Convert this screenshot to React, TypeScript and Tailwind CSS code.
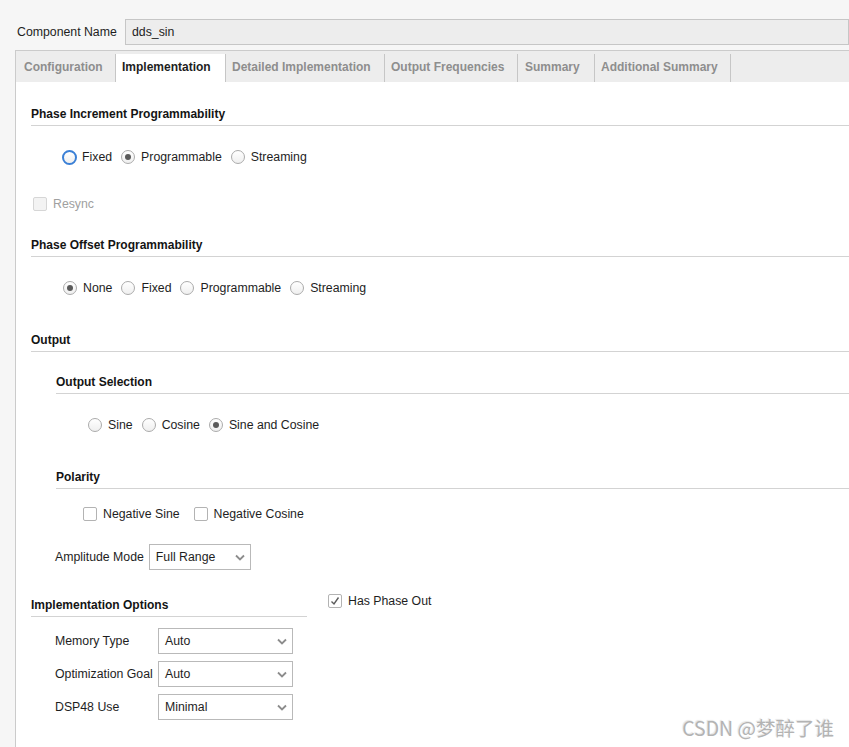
import React from "react";

const tabs = [
  { label: "Configuration", width: "w-[100px]", pad: "pl-[8px]" },
  { label: "Implementation", width: "w-[110px]", pad: "pl-[6px]", active: true },
  { label: "Detailed Implementation", width: "w-[159px]", pad: "pl-[6px]" },
  { label: "Output Frequencies", width: "w-[133px]", pad: "pl-[6px]" },
  { label: "Summary", width: "w-[77px]", pad: "pl-[7px]" },
  { label: "Additional Summary", width: "w-[136px]", pad: "pl-[6px]" },
];

export default function App() {
  return (
    <div
      className="relative h-[747px] w-[849px] overflow-hidden bg-[#f6f6f6] text-[12.3px] leading-[15px] text-[#1e1e1e]"
      style={{ fontFamily: '"Liberation Sans", Arial, sans-serif' }}
    >
      <div className="flex items-center pt-[19px]">
        <span className="w-[125px] shrink-0 whitespace-nowrap pl-[17px]">Component Name</span>
        <div className="flex h-[26px] flex-1 items-center border border-[#c6c6c6] bg-[#ededed] pl-[6px]">
          dds_sin
        </div>
      </div>

      <div className="ml-[15px] mt-[5px] border-l border-t border-[#cbcbcb] bg-white">
        <div className="flex h-[31px] items-end bg-[#ededed]">
          {tabs.map((tab) => (
            <div
              key={tab.label}
              className={`flex h-[28px] items-center whitespace-nowrap border-r border-[#c6c6c6] pb-[1px] text-[12px] font-bold ${tab.width} ${tab.pad} ${
                tab.active ? "bg-white text-[#1e1e1e]" : "text-[#8e8e8e]"
              }`}
            >
              {tab.label}
            </div>
          ))}
        </div>

        <div className="h-[700px] pl-[15px]">
          <SectionHeader title="Phase Increment Programmability" className="mt-[25px]" />
          <div className="ml-[31px] mt-[23px] flex h-[16px] items-center gap-[9px]">
            <Radio label="Fixed" focused />
            <Radio label="Programmable" checked />
            <Radio label="Streaming" />
          </div>
          <div className="ml-[2px] mt-[31px] flex h-[16px] items-center gap-[6px] text-[#a0a0a0]">
            <Checkbox disabled />
            <span>Resync</span>
          </div>

          <SectionHeader title="Phase Offset Programmability" className="mt-[26px]" />
          <div className="ml-[32px] mt-[23px] flex h-[16px] items-center gap-[9px]">
            <Radio label="None" checked />
            <Radio label="Fixed" />
            <Radio label="Programmable" />
            <Radio label="Streaming" />
          </div>

          <SectionHeader title="Output" className="mt-[37px]" />
          <div className="ml-[25px]">
            <SectionHeader title="Output Selection" className="mt-[23px]" />
            <div className="ml-[32px] mt-[23px] flex h-[16px] items-center gap-[9px]">
              <Radio label="Sine" />
              <Radio label="Cosine" />
              <Radio label="Sine and Cosine" checked />
            </div>

            <SectionHeader title="Polarity" className="mt-[37px]" />
            <div className="ml-[27px] mt-[17px] flex h-[16px] items-center gap-[14px]">
              <div className="flex items-center gap-[6px]">
                <Checkbox />
                <span>Negative Sine</span>
              </div>
              <div className="flex items-center gap-[6px]">
                <Checkbox />
                <span>Negative Cosine</span>
              </div>
            </div>

            <div className="-ml-[1px] mt-[22px] flex items-center gap-[5px]">
              <span>Amplitude Mode</span>
              <Select value="Full Range" className="w-[102px]" />
            </div>
          </div>

          <div className="flex gap-[21px]">
            <div className="w-[276px]">
              <SectionHeader title="Implementation Options" className="mt-[28px]" />
              <div className="ml-[24px] mt-[11px] flex flex-col gap-[7px]">
                <OptionRow label="Memory Type" value="Auto" />
                <OptionRow label="Optimization Goal" value="Auto" />
                <OptionRow label="DSP48 Use" value="Minimal" />
              </div>
            </div>
            <div className="mt-[23px] flex h-[16px] items-center gap-[6px]">
              <Checkbox checked />
              <span>Has Phase Out</span>
            </div>
          </div>
        </div>
      </div>

      <div
        className="absolute bottom-[8px] right-[15px] text-[19.5px] leading-[22px] text-[#b3b3b3]"
        style={{ fontFamily: '"Noto Sans CJK SC", "Noto Sans", sans-serif', textShadow: "1px 1px 1px #ffffff, -1px -1px 1px #e4e4e4" }}
      >
        CSDN @梦醉了谁
      </div>
    </div>
  );
}

function SectionHeader({ title, className = "" }: { title: string; className?: string }) {
  return (
    <div className={`border-b border-[#d3d3d3] pb-[3px] text-[12px] font-bold leading-[15px] text-[#141414] ${className}`}>
      {title}
    </div>
  );
}

function Radio({ label, checked, focused }: { label: string; checked?: boolean; focused?: boolean }) {
  return (
    <div className={`flex items-center ${focused ? "gap-[5px]" : "gap-[6px]"}`}>
      <span
        className={`flex items-center justify-center rounded-full bg-gradient-to-b from-white to-[#efefef] ${
          focused ? "h-[15px] w-[15px] border-2 border-[#3b80d6]" : "h-[14px] w-[14px] border border-[#ababab]"
        }`}
      >
        {checked && <span className="h-[6px] w-[6px] rounded-full bg-[#5a5a5a]" />}
      </span>
      <span>{label}</span>
    </div>
  );
}

function Checkbox({ checked, disabled }: { checked?: boolean; disabled?: boolean }) {
  return (
    <span
      className={`flex h-[14px] w-[14px] items-center justify-center rounded-[2px] border ${
        disabled ? "border-[#d6d6d6] bg-[#f3f3f3]" : "border-[#b3b3b3] bg-white"
      }`}
    >
      {checked && (
        <svg width="10" height="10" viewBox="0 0 10 10">
          <path d="M1.5 5.5 L4 8 L8.5 1.5" fill="none" stroke="#5c5c5c" strokeWidth="1.4" />
        </svg>
      )}
    </span>
  );
}

function Select({ value, className = "" }: { value: string; className?: string }) {
  return (
    <div className={`flex h-[26px] items-center justify-between border border-[#b9b9b9] bg-white pl-[6px] pr-[5px] ${className}`}>
      <span>{value}</span>
      <svg width="10" height="7" viewBox="0 0 10 7">
        <path d="M1 1.5 L5 5.5 L9 1.5" fill="none" stroke="#8c8c8c" strokeWidth="1.8" />
      </svg>
    </div>
  );
}

function OptionRow({ label, value }: { label: string; value: string }) {
  return (
    <div className="flex items-center">
      <span className="w-[103px]">{label}</span>
      <Select value={value} className="w-[135px]" />
    </div>
  );
}
